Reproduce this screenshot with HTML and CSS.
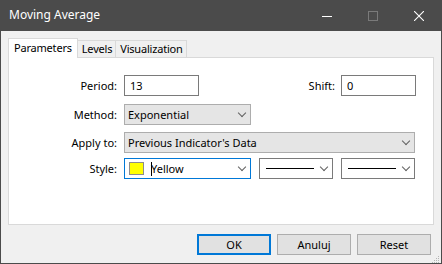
FILE: index.html
```html
<!DOCTYPE html>
<html lang="en">
<head>
  <meta charset="UTF-8" />
  <title>Moving Average</title>
  <link rel="stylesheet" href="styles.css">
</head>
<body>
  <div class="window">
    <div class="titlebar">
      <span class="title">Moving Average</span>
      <div class="win-btns">
        <span class="win-btn">
          <svg width="10" height="10" viewBox="0 0 10 10"><path d="M0 5.5h10" stroke="#fff" stroke-width="1"/></svg>
        </span>
        <span class="win-btn disabled">
          <svg width="10" height="10" viewBox="0 0 10 10"><rect x="0.5" y="0.5" width="9" height="9" fill="none" stroke="#7a7a7a"/></svg>
        </span>
        <span class="win-btn">
          <svg width="10" height="10" viewBox="0 0 10 10"><path d="M0 0L10 10M10 0L0 10" stroke="#fff" stroke-width="1.1"/></svg>
        </span>
      </div>
    </div>

    <div class="content">
      <div class="tabs">
        <div class="tab active">Parameters</div>
        <div class="tab">Levels</div>
        <div class="tab">Visualization</div>
      </div>

      <div class="panel">
        <div class="row row-period">
          <label class="lbl">Period:</label>
          <div class="edit edit-short">13</div>
          <label class="lbl lbl-shift">Shift:</label>
          <div class="edit edit-short">0</div>
        </div>
        <div class="row row-method">
          <label class="lbl">Method:</label>
          <div class="combo combo-mid"><span>Exponential</span><span class="arrow"></span></div>
        </div>
        <div class="row row-apply">
          <label class="lbl">Apply to:</label>
          <div class="combo combo-wide"><span>Previous Indicator's Data</span><span class="arrow"></span></div>
        </div>
        <div class="row row-style">
          <label class="lbl">Style:</label>
          <div class="combo combo-mid white focus">
            <span class="swatch"></span><span class="caret"></span><span>Yellow</span><span class="arrow"></span>
          </div>
          <div class="combo combo-line white"><span class="line"></span><span class="arrow"></span></div>
          <div class="combo combo-line white"><span class="line"></span><span class="arrow"></span></div>
        </div>
      </div>

      <div class="buttons">
        <button class="btn default">OK</button>
        <button class="btn">Anuluj</button>
        <button class="btn">Reset</button>
      </div>
    </div>
    <div class="grip">
      <svg width="10" height="10" viewBox="0 0 10 10" fill="#b5b5b5">
        <rect x="8" y="2" width="1" height="1"/><rect x="6" y="4" width="1" height="1"/><rect x="8" y="4" width="1" height="1"/>
        <rect x="4" y="6" width="1" height="1"/><rect x="6" y="6" width="1" height="1"/><rect x="8" y="6" width="1" height="1"/>
        <rect x="2" y="8" width="1" height="1"/><rect x="4" y="8" width="1" height="1"/><rect x="6" y="8" width="1" height="1"/><rect x="8" y="8" width="1" height="1"/>
      </svg>
    </div>
  </div>
</body>
</html>
```

FILE: styles.css
```css
html, body {
  margin: 0;
  padding: 0;
}
body {
  font-family: "Noto Sans", "Open Sans", sans-serif;
  font-size: 11px;
  color: #000;
  background: #f0f0f0;
}
.window {
  position: relative;
  width: 442px;
  height: 264px;
  box-sizing: border-box;
  border: 1px solid #4b4b4b;
  border-top: none;
  background: #f0f0f0;
}
.titlebar {
  height: 31px;
  background: #4b4b4b;
  color: #fff;
  display: flex;
  align-items: center;
  justify-content: space-between;
  margin: 0 -1px;
  padding-left: 9px;
}
.title {
  font-size: 12px;
  color: #fff;
  padding-bottom: 2px;
}
.win-btns {
  display: flex;
  height: 100%;
}
.win-btn {
  width: 46px;
  display: flex;
  align-items: center;
  justify-content: center;
}
.content {
  padding: 7px 7px 0 7px;
}
.tabs {
  display: flex;
  height: 19px;
  align-items: flex-end;
}
.tab {
  height: 17px;
  line-height: 16px;
  padding: 0 3px 0 4px;
  border: 1px solid #d9d9d9;
  border-bottom: none;
  border-left: none;
  background: #f0f0f0;
  box-sizing: border-box;
  letter-spacing: -0.2px;
}
.tab.active {
  height: 20px;
  line-height: 18px;
  background: #fff;
  border-left: 1px solid #d9d9d9;
  padding: 0 5px;
  position: relative;
  z-index: 1;
  margin-bottom: -1px;
}
.panel {
  height: 168px;
  box-sizing: border-box;
  background: #fff;
  border: 1px solid #d9d9d9;
  width: 426px;
  padding-top: 17px;
}
.row {
  display: flex;
  align-items: center;
  height: 21px;
  margin-bottom: 8px;
}
.row-method {
  margin-bottom: 7px;
}
.row-apply {
  margin-bottom: 5px;
}
.lbl {
  width: 115px;
  text-align: right;
  padding-right: 7px;
  box-sizing: border-box;
}
.lbl-shift {
  width: 142px;
  padding-right: 6px;
}
.edit {
  height: 21px;
  box-sizing: border-box;
  border: 1px solid #7a7a7a;
  padding: 0 5px;
  line-height: 19px;
  background: #fff;
}
.edit-short {
  width: 75px;
}
.combo {
  height: 21px;
  box-sizing: border-box;
  border: 1px solid #adadad;
  background: #e5e5e5;
  display: flex;
  align-items: center;
  padding-left: 3px;
  line-height: 19px;
}
.combo.white {
  background: #fff;
  border-color: #7a7a7a;
}
.combo.focus {
  border-color: #0078d7;
}
.combo-mid {
  width: 127px;
}
.combo-wide {
  width: 291px;
}
.combo-line {
  width: 74px;
  margin-left: 8px;
}
.arrow {
  margin-left: auto;
  width: 17px;
  height: 19px;
  display: flex;
  align-items: center;
  justify-content: center;
}
.arrow::before {
  content: "";
  width: 5px;
  height: 5px;
  border-right: 1px solid #606060;
  border-bottom: 1px solid #606060;
  transform: rotate(45deg);
  margin-top: -4px;
}
.swatch {
  width: 13px;
  height: 11px;
  background: #ffff00;
  border: 1px solid #8c8c8c;
  margin-left: 1px;
  margin-right: 7px;
}
.caret {
  width: 1px;
  height: 14px;
  background: #000;
  margin-right: -1px;
}
.line {
  width: 48px;
  height: 1px;
  background: #000;
  margin-left: 3px;
}
.buttons {
  display: flex;
  justify-content: flex-end;
  gap: 6px;
  padding-top: 9px;
  padding-right: 3px;
}
.btn {
  width: 74px;
  height: 21px;
  box-sizing: border-box;
  font-family: inherit;
  font-size: 11px;
  background: #e1e1e1;
  border: 1px solid #adadad;
  padding: 0;
  color: #000;
}
.btn.default {
  border: 2px solid #0078d7;
}
.grip {
  position: absolute;
  right: 1px;
  bottom: 1px;
  width: 10px;
  height: 10px;
}
```
